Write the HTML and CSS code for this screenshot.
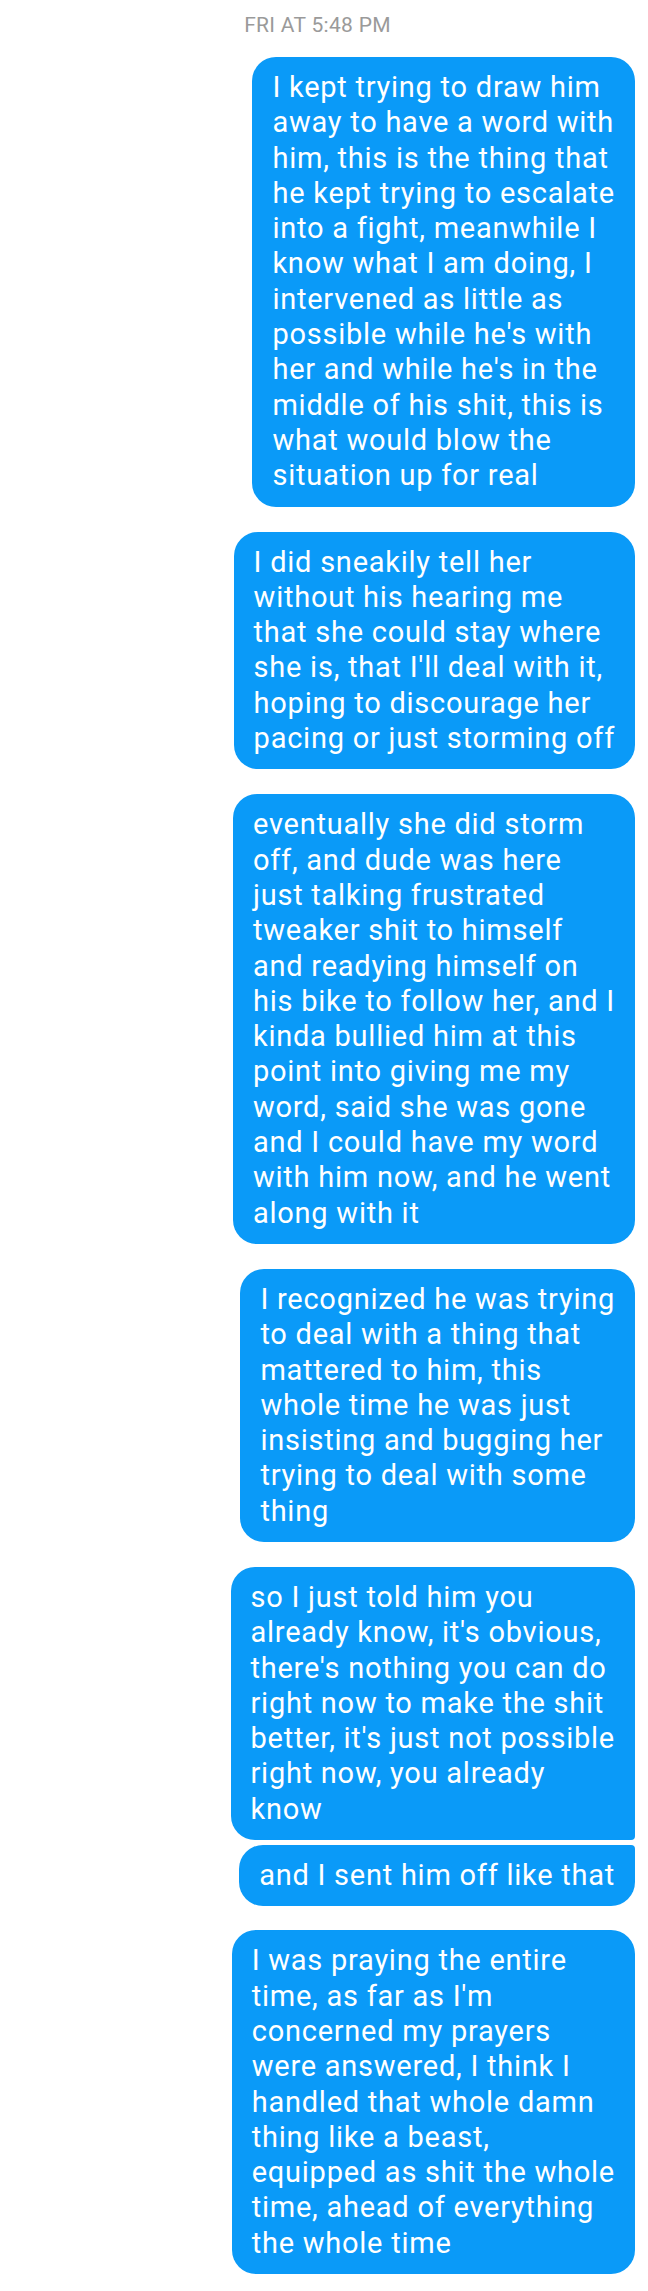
FILE: index.html
```html
<!DOCTYPE html>
<html>
<head>
<meta charset="utf-8">
<link rel="stylesheet" href="styles.css">
</head>
<body>
<div class="thread">
  <div class="stamp">FRI AT 5:48 PM</div>
  <div class="msg">I kept trying to draw him<br>away to have a word with<br>him, this is the thing that<br>he kept trying to escalate<br>into a fight, meanwhile I<br>know what I am doing, I<br>intervened as little as<br>possible while he's with<br>her and while he's in the<br>middle of his shit, this is<br>what would blow the<br>situation up for real</div>
  <div class="msg">I did sneakily tell her<br>without his hearing me<br>that she could stay where<br>she is, that I'll deal with it,<br>hoping to discourage her<br>pacing or just storming off</div>
  <div class="msg">eventually she did storm<br>off, and dude was here<br>just talking frustrated<br>tweaker shit to himself<br>and readying himself on<br>his bike to follow her, and I<br>kinda bullied him at this<br>point into giving me my<br>word, said she was gone<br>and I could have my word<br>with him now, and he went<br>along with it</div>
  <div class="msg">I recognized he was trying<br>to deal with a thing that<br>mattered to him, this<br>whole time he was just<br>insisting and bugging her<br>trying to deal with some<br>thing</div>
  <div class="msg group-top">so I just told him you<br>already know, it's obvious,<br>there's nothing you can do<br>right now to make the shit<br>better, it's just not possible<br>right now, you already<br>know</div>
  <div class="msg group-bottom">and I sent him off like that</div>
  <div class="msg">I was praying the entire<br>time, as far as I'm<br>concerned my prayers<br>were answered, I think I<br>handled that whole damn<br>thing like a beast,<br>equipped as shit the whole<br>time, ahead of everything<br>the whole time</div>
</div>
</body>
</html>
```
FILE: styles.css
```css
html, body {
  margin: 0;
  padding: 0;
  background: #ffffff;
}

.thread {
  display: flex;
  flex-direction: column;
  align-items: flex-end;
  padding: 13px 13px 18px 0;
  font-family: Roboto, "Noto Sans", sans-serif;
}

.stamp {
  align-self: center;
  font-size: 21px;
  line-height: 25px;
  letter-spacing: 0.3px;
  color: #9a9a9a;
  margin-bottom: 19px;
}

.msg {
  white-space: nowrap;
  padding: 13px 20px;
  background: #0a9af8;
  color: #ffffff;
  font-size: 29px;
  letter-spacing: 0.75px;
  line-height: 35.3px;
  border-radius: 24px;
  margin-bottom: 25px;
}

.msg.group-top {
  border-bottom-right-radius: 4px;
  margin-bottom: 5px;
}

.msg.group-bottom {
  border-top-right-radius: 4px;
  margin-bottom: 24px;
}
```
